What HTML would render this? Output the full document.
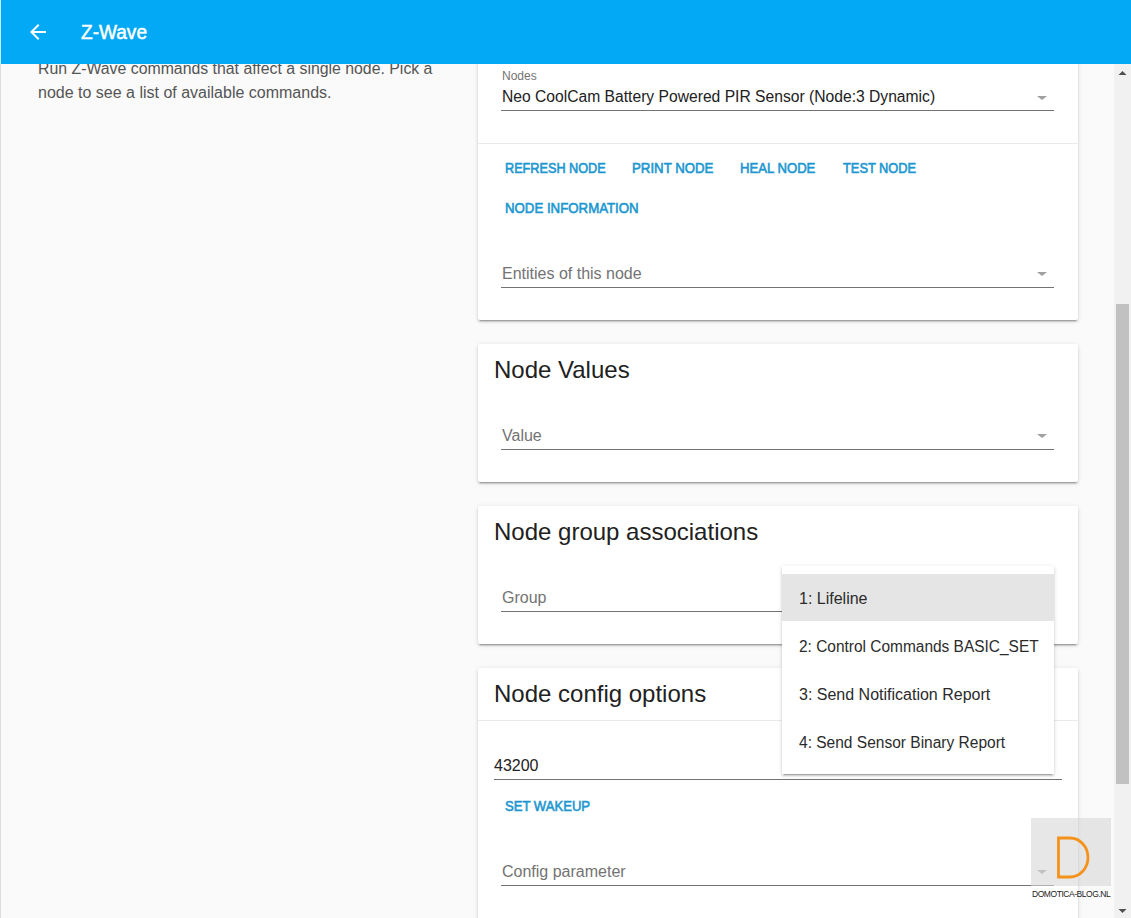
<!DOCTYPE html>
<html><head><meta charset="utf-8">
<style>
html,body{margin:0;padding:0;}
body{width:1131px;height:918px;overflow:hidden;position:relative;background:#fafafa;font-family:"Liberation Sans",sans-serif;}
.a{position:absolute;white-space:nowrap;}
.hdr{left:0;top:0;width:1131px;height:64px;background:#03a9f4;}
.card{position:absolute;left:478px;width:600px;background:#fff;border-radius:2px;box-shadow:0 2px 2px 0 rgba(0,0,0,.14),0 1px 5px 0 rgba(0,0,0,.12),0 3px 1px -2px rgba(0,0,0,.2);}
.ul{position:absolute;height:1px;background:#737373;}
.ph{position:absolute;white-space:nowrap;font-size:16px;color:#737373;line-height:20px;}
.txt{position:absolute;white-space:nowrap;font-size:16px;color:#212121;line-height:20px;}
.btn{position:absolute;white-space:nowrap;font-size:14px;color:#1d97d0;-webkit-text-stroke:0.6px #1d97d0;line-height:16px;transform-origin:0 0;}
.ttl{position:absolute;white-space:nowrap;font-size:24px;color:#212121;line-height:28px;transform-origin:0 0;}
.arr{position:absolute;width:0;height:0;border-left:5px solid transparent;border-right:5px solid transparent;border-top:4px solid #a0a0a0;margin-top:1px;}
.div{position:absolute;left:0;width:600px;height:1px;background:#eaeaea;}
.mi{position:absolute;left:0;width:272px;height:48px;}
.mt{position:absolute;left:17px;white-space:nowrap;font-size:16px;color:#2b2b2b;line-height:20px;transform-origin:0 0;}
</style></head><body>

<!-- left paragraph -->
<div class="a" style="left:38px;top:57px;font-size:16px;line-height:24px;color:#555;transform:scaleX(.99);transform-origin:0 0;">Run Z-Wave commands that affect a single node. Pick a</div>
<div class="a" style="left:38px;top:81px;font-size:16px;line-height:24px;color:#555;">node to see a list of available commands.</div>

<!-- card 1 -->
<div class="card" style="top:20px;height:300px;">
  <div class="a" style="left:24px;top:49px;font-size:12px;color:#737373;line-height:14px;">Nodes</div>
  <div class="txt" style="left:24px;top:67px;transform:scaleX(.978);transform-origin:0 0;">Neo CoolCam Battery Powered PIR Sensor (Node:3 Dynamic)</div>
  <div class="arr" style="left:559px;top:75px;"></div>
  <div class="ul" style="left:23px;top:90px;width:553px;"></div>
  <div class="div" style="top:123px;"></div>
  <div class="btn" style="left:27px;top:140px;transform:scaleX(.905);">REFRESH NODE</div>
  <div class="btn" style="left:154px;top:140px;transform:scaleX(.946);">PRINT NODE</div>
  <div class="btn" style="left:262px;top:140px;transform:scaleX(.9375);">HEAL NODE</div>
  <div class="btn" style="left:365px;top:140px;transform:scaleX(.916);">TEST NODE</div>
  <div class="btn" style="left:27px;top:180px;transform:scaleX(.946);">NODE INFORMATION</div>
  <div class="ph" style="left:24px;top:244px;">Entities of this node</div>
  <div class="arr" style="left:559px;top:251px;"></div>
  <div class="ul" style="left:23px;top:267px;width:553px;"></div>
</div>

<!-- card 2 -->
<div class="card" style="top:344px;height:138px;">
  <div class="ttl" style="left:16px;top:12px;">Node Values</div>
  <div class="ph" style="left:24px;top:82px;">Value</div>
  <div class="arr" style="left:559px;top:89px;"></div>
  <div class="ul" style="left:23px;top:105px;width:553px;"></div>
</div>

<!-- card 3 -->
<div class="card" style="top:506px;height:138px;">
  <div class="ttl" style="left:16px;top:12px;">Node group associations</div>
  <div class="ph" style="left:24px;top:82px;">Group</div>
  <div class="ul" style="left:23px;top:105px;width:553px;"></div>
</div>

<!-- card 4 -->
<div class="card" style="top:668px;height:280px;">
  <div class="ttl" style="left:16px;top:12px;">Node config options</div>
  <div class="div" style="top:52px;"></div>
  <div class="txt" style="left:16px;top:88px;">43200</div>
  <div class="ul" style="left:16px;top:111px;width:568px;"></div>
  <div class="btn" style="left:27px;top:130px;transform:scaleX(.935);">SET WAKEUP</div>
  <div class="ph" style="left:24px;top:194px;">Config parameter</div>
  <div class="arr" style="left:559px;top:201px;"></div>
  <div class="ul" style="left:23px;top:217px;width:553px;"></div>
</div>

<!-- dropdown menu -->
<div class="a" style="left:782px;top:566px;width:272px;height:208px;background:#fff;box-shadow:0 2px 2px 0 rgba(0,0,0,.14),0 1px 5px 0 rgba(0,0,0,.12),0 3px 1px -2px rgba(0,0,0,.2);">
  <div class="mi" style="top:8px;height:47px;background:#e5e5e5;"><div class="mt" style="top:15px;">1: Lifeline</div></div>
  <div class="mi" style="top:56px;"><div class="mt" style="top:15px;transform:scaleX(.966);">2: Control Commands BASIC_SET</div></div>
  <div class="mi" style="top:104px;"><div class="mt" style="top:15px;">3: Send Notification Report</div></div>
  <div class="mi" style="top:152px;"><div class="mt" style="top:15px;transform:scaleX(.97);">4: Send Sensor Binary Report</div></div>
</div>

<!-- header -->
<div class="a hdr"></div>
<svg class="a" style="left:26px;top:20px;" width="24" height="24" viewBox="0 0 24 24"><path fill="#fff" d="M20 11H7.83l5.59-5.59L12 4l-8 8 8 8 1.41-1.41L7.83 13H20v-2z"/></svg>
<div class="a" style="left:81px;top:20px;font-size:20px;color:#fff;line-height:24px;-webkit-text-stroke:0.5px #fff;transform:scaleX(.953);transform-origin:0 0;">Z-Wave</div>

<!-- left border -->
<div class="a" style="left:0;top:0;width:1px;height:64px;background:#bff4ff;"></div>
<div class="a" style="left:0;top:64px;width:1px;height:854px;background:#dcdcdc;"></div>

<!-- scrollbar -->
<div class="a" style="left:1114px;top:64px;width:17px;height:854px;background:#f1f1f1;"></div>
<div class="a" style="left:1116px;top:304px;width:13px;height:480px;background:#c1c1c1;"></div>

<!-- watermark -->
<div class="a" style="left:1031px;top:818px;width:80px;height:68px;background:rgba(215,215,215,.6);"></div>
<svg class="a" style="left:1050px;top:830px;" width="46" height="54" viewBox="0 0 46 54"><path d="M8.5 8 H20 A18 19.5 0 0 1 20 47 H8.5 Z" fill="none" stroke="#f5921a" stroke-width="2.8"/></svg>
<div class="a" style="left:1032px;top:889px;font-size:8.5px;line-height:10px;color:#222;letter-spacing:-0.45px;">DOMOTICA-BLOG.NL</div>
<svg class="a" style="left:1118px;top:70px;" width="9" height="6" viewBox="0 0 9 6"><path d="M0.5 5 L4.5 1 L8.5 5 Z" fill="#505050"/></svg>
<svg class="a" style="left:1118px;top:908px;" width="9" height="6" viewBox="0 0 9 6"><path d="M0.5 1 L4.5 5 L8.5 1 Z" fill="#505050"/></svg>
</body></html>
